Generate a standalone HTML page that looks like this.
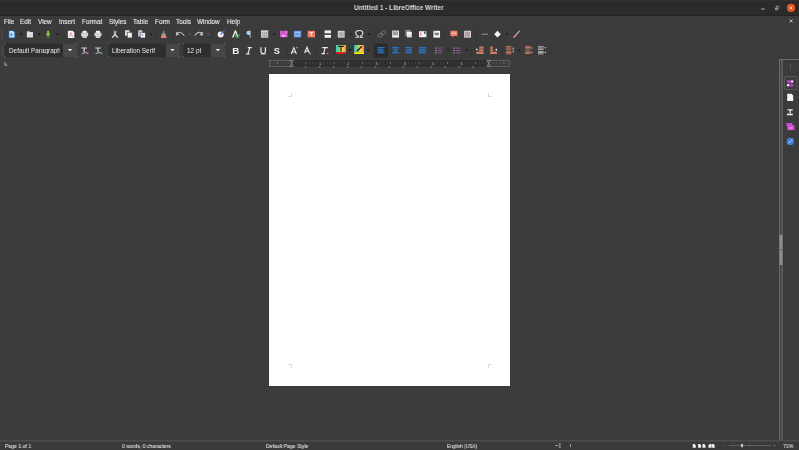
<!DOCTYPE html>
<html><head><meta charset="utf-8">
<style>
*{margin:0;padding:0;box-sizing:border-box}
html,body{width:799px;height:450px;overflow:hidden;background:#3b3b3b;font-family:"Liberation Sans",sans-serif;position:relative}
.a{position:absolute}
#title{left:0;top:0;width:799px;height:16px;background:#2d2a2a;border-bottom:1px solid #252323;box-shadow:inset 0 1px 0 #333030}
#title .t{left:354.4px;top:3.6px;font-weight:bold;font-size:7px;color:#dedede;white-space:nowrap;transform:scaleX(0.922);transform-origin:0 0;will-change:transform}
.menu{top:18px;font-size:6.4px;color:#eaeaea;white-space:nowrap;-webkit-text-stroke:0.1px #eaeaea;will-change:transform}
#doc{left:0;top:58px;width:779px;height:383px;background:#3c3c3c}
#page{left:269px;top:74px;width:241px;height:312px;background:#fff;box-shadow:0 0 1.5px 0.5px rgba(0,0,0,0.22)}
#status{left:0;top:440px;width:799px;height:10px;background:#3a3a3a;border-top:1px solid #4c4c4c;box-shadow:inset 0 1px 0 #444}
.st{top:442.6px;font-size:5.8px;color:#e4e4e4;white-space:nowrap;transform:scaleX(0.88);transform-origin:0 0;-webkit-text-stroke:0.05px #e4e4e4;will-change:transform}
.cb{top:46.6px;font-size:6.4px;color:#e8e8e8;white-space:nowrap;overflow:hidden;will-change:transform}
</style></head><body>
<div id="title" class="a"><div class="t a">Untitled 1 - LibreOffice Writer</div></div>
<div class="a menu" style="left:4px">File</div>
<div class="a menu" style="left:20px">Edit</div>
<div class="a menu" style="left:37.5px">View</div>
<div class="a menu" style="left:58.5px">Insert</div>
<div class="a menu" style="left:82px">Format</div>
<div class="a menu" style="left:109px">Styles</div>
<div class="a menu" style="left:133px">Table</div>
<div class="a menu" style="left:154.5px">Form</div>
<div class="a menu" style="left:176px">Tools</div>
<div class="a menu" style="left:197px">Window</div>
<div class="a menu" style="left:227px">Help</div>
<div id="doc" class="a"></div>
<div id="page" class="a"></div>
<div id="status" class="a"></div>
<div class="a st" style="left:5px">Page 1 of 1</div>
<div class="a st" style="left:122px">0 words, 0 characters</div>
<div class="a st" style="left:266px">Default Page Style</div>
<div class="a st" style="left:447px;transform:scaleX(0.83)">English (USA)</div>
<div class="a st" style="left:783px">71%</div>
<svg class="a" style="left:0;top:0" width="799" height="450" viewBox="0 0 799 450"><rect x="1.3" y="29" width="1.4" height="0.6" fill="#5a5a5a"/><rect x="1.3" y="30" width="1.4" height="0.6" fill="#5a5a5a"/><rect x="1.3" y="31" width="1.4" height="0.6" fill="#5a5a5a"/><rect x="1.3" y="32" width="1.4" height="0.6" fill="#5a5a5a"/><rect x="1.3" y="33" width="1.4" height="0.6" fill="#5a5a5a"/><rect x="1.3" y="34" width="1.4" height="0.6" fill="#5a5a5a"/><rect x="1.3" y="35" width="1.4" height="0.6" fill="#5a5a5a"/><rect x="1.3" y="36" width="1.4" height="0.6" fill="#5a5a5a"/><rect x="1.3" y="37" width="1.4" height="0.6" fill="#5a5a5a"/><rect x="1.3" y="38" width="1.4" height="0.6" fill="#5a5a5a"/><path d="M8.5 30.2 H13.5 L15.2 32 V38.2 H8.5Z" fill="#1f5fa8"/><path d="M9.3 31 H13 L14.4 32.4 V37.4 H9.3Z" fill="#cfe3f5"/><path d="M10.5 32.5 L13 34.5 L10.8 37 Z" fill="#3d8fd6"/><path d="M19.8 33.5 L22.8 33.5 L21.3 35.3Z" fill="#151515"/><path d="M26.8 31.2 H29.5 L30.2 32 H33 V37.5 H26.8Z" fill="#cfcfcf"/><rect x="27.6" y="32.6" width="4.8" height="4.3" fill="#eeeeee"/><rect x="29.2" y="33.8" width="2.6" height="2.4" fill="#bcd3f0"/><path d="M37.8 33.5 L40.8 33.5 L39.3 35.3Z" fill="#151515"/><rect x="47.2" y="30.8" width="1.8" height="3.2" fill="#9ad04a"/><path d="M45.6 33.6 H50.6 L48.1 37 Z" fill="#8cc63f"/><rect x="46" y="37.2" width="4.2" height="0.4" fill="#777"/><path d="M56.2 33.5 L59.2 33.5 L57.7 35.3Z" fill="#151515"/><rect x="62.6" y="29" width="0.6" height="11" fill="#333"/><path d="M67.9 30.8 H72.6 L74.3 32.5 V37.9 H67.9Z" fill="#f4f4f4"/><path d="M69.3 37 L70.9 32.5 L72.6 37" stroke="#e86a6a" stroke-width="0.7" fill="none"/><rect x="82.6" y="30.8" width="4" height="2.2" fill="#f4f4f4"/><rect x="81" y="32.6" width="7.2" height="3.6" rx="1.2" fill="#d0d0d0"/><rect x="82.4" y="35.6" width="4.4" height="2.2" fill="#f4f4f4"/><rect x="82.8" y="36.4" width="3.6" height="0.7" fill="#8fb4f0"/><rect x="96" y="30.8" width="4" height="2.2" fill="#f4f4f4"/><rect x="94.4" y="32.6" width="7.2" height="3.6" rx="1.2" fill="#d0d0d0"/><circle cx="98" cy="34.4" r="1.3" fill="#f4f4f4"/><circle cx="98" cy="34.4" r="0.6" fill="#777"/><rect x="95.8" y="35.6" width="4.4" height="2.2" fill="#f4f4f4"/><rect x="96.2" y="36.4" width="3.6" height="0.7" fill="#8fb4f0"/><rect x="106.2" y="29" width="0.6" height="11" fill="#333"/><path d="M114.1 30.8 L114.6 34.6 M115.9 30.8 L115.4 34.6" stroke="#c8c8c8" stroke-width="1" fill="none"/><path d="M115 34.2 L112.6 37.2 M115 34.2 L117.4 37.2" stroke="#c8c8c8" stroke-width="1.6" stroke-linecap="round" fill="none"/><rect x="125" y="30.2" width="4.5" height="5.5" fill="#d9d9d9"/><rect x="127.3" y="32.3" width="4.8" height="5.6" fill="#f2f2f2" stroke="#3b3b3b" stroke-width="0.5"/><rect x="138" y="30.6" width="4.6" height="6" fill="#bcbcbc"/><rect x="139.3" y="30.2" width="2" height="1" fill="#e0e0e0"/><rect x="140.4" y="32.8" width="4.8" height="5.1" fill="#f4f4f4" stroke="#3b3b3b" stroke-width="0.4"/><rect x="141.6" y="34" width="1.6" height="1.6" fill="#6aa0e8"/><path d="M149.8 33.5 L152.8 33.5 L151.3 35.3Z" fill="#151515"/><rect x="155.7" y="29" width="0.6" height="11" fill="#333"/><rect x="163.2" y="30.8" width="1" height="2.6" fill="#aaa"/><path d="M162 33.3 H165.4 L166.4 37.8 H161Z" fill="#9a9a9a"/><path d="M161.5 35.5 H166 L166.4 37.9 H161Z" fill="#ef7e66"/><rect x="172.6" y="29" width="0.6" height="11" fill="#333"/><path d="M176.6 33.2 Q180.5 30.4 184.3 35.6" stroke="#c0c0c0" stroke-width="1.1" fill="none"/><path d="M175.8 31.8 L176.2 35.8 L179.4 34.6Z" fill="#c0c0c0"/><path d="M188.8 33.5 L190.8 33.5 L189.8 35.3Z" fill="#777"/><path d="M194.6 35.8 Q198 30.4 202 33.2" stroke="#c8c8c8" stroke-width="1.1" fill="none"/><path d="M203 31.8 L202.6 36 L199.4 34.6Z" fill="#c8c8c8"/><path d="M207.2 33.5 L209.2 33.5 L208.2 35.3Z" fill="#777"/><rect x="212.3" y="29" width="0.6" height="11" fill="#333"/><circle cx="220.7" cy="34.4" r="3" fill="#f2f2f2"/><path d="M220.8 34.4 L224.6 30.3" stroke="#2f6fc9" stroke-width="1.2"/><circle cx="220.2" cy="34.9" r="0.5" fill="#e06060"/><path d="M232 37.4 L234.9 30.2 H235.9 L238.8 37.4 H237.2 L235.4 32.6 L233.6 37.4Z" fill="#eeeeee"/><path d="M234.2 35.2 L236.6 35.2" stroke="#9a9a9a" stroke-width="0.8"/><path d="M235.4 36 L236.9 37.6 L239.9 34.4" stroke="#2ea84a" stroke-width="1.2" fill="none"/><path d="M248.8 30.8 H250.6 V37.8 H249.8 V35 Q246.4 35 246.4 32.9 Q246.4 30.8 248.8 30.8Z" fill="#a8d4f2"/><rect x="255.6" y="29" width="0.6" height="11" fill="#333"/><rect x="261" y="30.6" width="7.2" height="7.2" fill="#c8c8c8"/><rect x="262.6" y="31.2" width="0.6" height="6" fill="#8a8a8a"/><rect x="264.5" y="31.2" width="0.6" height="6" fill="#8a8a8a"/><rect x="266.3" y="31.2" width="0.6" height="6" fill="#8a8a8a"/><rect x="261" y="30.6" width="7.2" height="0.8" fill="#f0f0f0"/><path d="M272.8 33.5 L275.8 33.5 L274.3 35.3Z" fill="#151515"/><rect x="280" y="30.8" width="7.6" height="6.4" fill="#d455d0"/><path d="M281.4 36.4 Q283.6 33.2 286 36.4Z" fill="#f5d9f3"/><circle cx="286.2" cy="31.9" r="0.6" fill="#f5d9f3"/><rect x="293.8" y="30.8" width="7.4" height="6.6" fill="#5b8fe0"/><rect x="294.6" y="31.6" width="5.6" height="4.8" fill="#9cc0f5"/><rect x="295.4" y="33.2" width="4" height="1.8" fill="#5b8fe0"/><rect x="307.6" y="30.8" width="7.4" height="6.6" fill="#f17e68"/><path d="M309.6 32.6 H313 M311.3 32.6 V36" stroke="#fff" stroke-width="0.8"/><rect x="318.8" y="29" width="0.6" height="11" fill="#333"/><rect x="324.6" y="30.4" width="6.4" height="3" fill="#f0f0f0"/><rect x="324.6" y="34.8" width="6.4" height="3" fill="#f0f0f0"/><rect x="324.6" y="33.6" width="6.4" height="0.6" fill="#6a3a62"/><rect x="337.8" y="30.8" width="6.8" height="6.8" fill="#e2e2e2"/><rect x="338.6" y="31.6" width="5.2" height="5.2" fill="#b4b4b4"/><rect x="340.4" y="33.6" width="1.6" height="0.9" fill="#e055d0"/><path d="M349.3 33.5 L352.3 33.5 L350.8 35.3Z" fill="#151515"/><path d="M355.4 37.3 H358.3 V36.3 Q355.7 35.2 355.7 33.3 Q355.7 30.5 359.3 30.5 Q362.9 30.5 362.9 33.3 Q362.9 35.2 360.3 36.3 V37.3 H363.2" stroke="#e8e8e8" stroke-width="1.1" fill="none"/><path d="M367.5 33.5 L370.5 33.5 L369 35.3Z" fill="#151515"/><rect x="373.8" y="29" width="0.6" height="11" fill="#333"/><g transform="translate(381.8 34) scale(0.85) rotate(-40) translate(-381.8 -34)"><rect x="376.6" y="32.4" width="5.4" height="3.2" rx="0.9" fill="none" stroke="#9a9a9a" stroke-width="0.7"/><rect x="381.6" y="32.4" width="5.4" height="3.2" rx="0.9" fill="none" stroke="#9a9a9a" stroke-width="0.7"/></g><rect x="392.2" y="30.6" width="6.8" height="7" fill="#f2f2f2"/><rect x="393" y="31.4" width="5.2" height="3.6" fill="#9e9e9e"/><rect x="393" y="35.6" width="5.2" height="0.4" fill="#f08a7a"/><rect x="405.6" y="30.4" width="5" height="5.6" fill="#cfcfcf"/><rect x="406.8" y="31.6" width="5.2" height="6" fill="#f2f2f2" stroke="#3b3b3b" stroke-width="0.4"/><rect x="407.4" y="35.6" width="4" height="0.5" fill="#f08a7a"/><rect x="419" y="31.2" width="7.4" height="6" fill="#f2f2f2"/><rect x="420.2" y="32.6" width="1" height="3" fill="#e66"/><path d="M424 31.6 H425.6 V34.2 L424.8 33.6 L424 34.2Z" fill="#555"/><rect x="433.4" y="30.8" width="6.6" height="6.8" fill="#f2f2f2"/><rect x="434.8" y="32.8" width="4" height="2.4" fill="#7a7a7a"/><rect x="434" y="31.6" width="1.6" height="0.6" fill="#e88"/><rect x="444" y="29" width="0.6" height="11" fill="#333"/><rect x="450.4" y="30.8" width="7" height="5.2" rx="0.8" fill="#f1816c"/><path d="M452 35.8 L452.6 37.4 L453.8 35.8Z" fill="#f1816c"/><rect x="451.4" y="32.6" width="5" height="1.4" fill="#f7b3a4"/><rect x="464.2" y="30.8" width="6.8" height="6.8" fill="#e4e4e4"/><rect x="465" y="31.6" width="5.2" height="5.2" fill="#a6a6a6"/><path d="M465.6 32.2 L469.8 36.2" stroke="#e88a7a" stroke-width="0.9"/><rect x="475" y="29" width="0.6" height="11" fill="#333"/><rect x="481.4" y="33.6" width="6.6" height="1.4" rx="0.5" fill="#777"/><path d="M497.5 30.8 L500.8 34.2 L497.5 37.6 L494.2 34.2Z" fill="#f6f6f6"/><path d="M505.8 33.5 L508.2 33.5 L507 35.3Z" fill="#151515"/><path d="M514.4 36.6 L519.4 31.2" stroke="#bdbdbd" stroke-width="1.2" stroke-linecap="round"/><circle cx="514.3" cy="36.8" r="1.1" fill="#f07a66"/><rect x="1.3" y="45" width="1.4" height="0.6" fill="#5a5a5a"/><rect x="1.3" y="46" width="1.4" height="0.6" fill="#5a5a5a"/><rect x="1.3" y="47" width="1.4" height="0.6" fill="#5a5a5a"/><rect x="1.3" y="48" width="1.4" height="0.6" fill="#5a5a5a"/><rect x="1.3" y="49" width="1.4" height="0.6" fill="#5a5a5a"/><rect x="1.3" y="50" width="1.4" height="0.6" fill="#5a5a5a"/><rect x="1.3" y="51" width="1.4" height="0.6" fill="#5a5a5a"/><rect x="1.3" y="52" width="1.4" height="0.6" fill="#5a5a5a"/><rect x="1.3" y="53" width="1.4" height="0.6" fill="#5a5a5a"/><rect x="1.3" y="54" width="1.4" height="0.6" fill="#5a5a5a"/><rect x="1.3" y="55" width="1.4" height="0.6" fill="#5a5a5a"/><rect x="5" y="43.6" width="58" height="13.6" fill="#2e2e2e"/><rect x="63" y="44" width="14" height="13.2" fill="#474747"/><path d="M67.8 49 H72.2 L70.0 51.3Z" fill="#f4f4f4"/><rect x="4.5" y="43.1" width="1.1" height="1.1" fill="#707070"/><rect x="76.5" y="43.1" width="1.1" height="1.1" fill="#707070"/><rect x="4.5" y="56.5" width="1.1" height="1.1" fill="#707070"/><rect x="76.5" y="56.5" width="1.1" height="1.1" fill="#707070"/><rect x="108.6" y="43.6" width="57.30000000000001" height="13.6" fill="#2e2e2e"/><rect x="165.9" y="44" width="13.099999999999994" height="13.2" fill="#474747"/><path d="M170.25 49 H174.64999999999998 L172.45 51.3Z" fill="#f4f4f4"/><rect x="108.1" y="43.1" width="1.1" height="1.1" fill="#707070"/><rect x="178.5" y="43.1" width="1.1" height="1.1" fill="#707070"/><rect x="108.1" y="56.5" width="1.1" height="1.1" fill="#707070"/><rect x="178.5" y="56.5" width="1.1" height="1.1" fill="#707070"/><rect x="183.2" y="43.6" width="27.600000000000023" height="13.6" fill="#2e2e2e"/><rect x="210.8" y="44" width="14.199999999999989" height="13.2" fill="#474747"/><path d="M215.70000000000002 49 H220.1 L217.9 51.3Z" fill="#f4f4f4"/><rect x="182.7" y="43.1" width="1.1" height="1.1" fill="#707070"/><rect x="224.5" y="43.1" width="1.1" height="1.1" fill="#707070"/><rect x="182.7" y="56.5" width="1.1" height="1.1" fill="#707070"/><rect x="224.5" y="56.5" width="1.1" height="1.1" fill="#707070"/><path d="M81.4 47.4 H87.0 V48.6 H84.80000000000001 V52 H83.60000000000001 V48.6 H81.4Z" fill="#d8d8d8"/><path d="M81.80000000000001 53.6 L87.0 52.2" stroke="#d8d8d8" stroke-width="0.8"/><circle cx="87.60000000000001" cy="53.4" r="1.1" fill="#c34fcf"/><path d="M95.2 47.4 H100.8 V48.6 H98.60000000000001 V52 H97.4 V48.6 H95.2Z" fill="#d8d8d8"/><path d="M95.60000000000001 53.6 L100.8 52.2" stroke="#d8d8d8" stroke-width="0.8"/><circle cx="101.4" cy="53.4" r="1.1" fill="#3cba4a"/><text x="232.2" y="54.4" font-family="Liberation Sans" font-weight="bold" font-size="9.8" fill="#f2f2f2">B</text><path d="M247.8 47.6 H251.8 M245.8 54 H249.8 M249.8 47.6 L247.8 54" stroke="#eee" stroke-width="1.1"/><path d="M261 47.2 V51.8 Q261 53.6 263.2 53.6 Q265.4 53.6 265.4 51.8 V47.2" stroke="#eee" stroke-width="1.2" fill="none"/><rect x="260.2" y="54.4" width="6" height="0.5" fill="#aaa"/><text x="273.8" y="54.2" font-family="Liberation Sans" font-weight="bold" font-size="9.2" fill="#eeeeee">S</text><rect x="287.4" y="44" width="0.6" height="13" fill="#333"/><path d="M291.2 54 L293.8 47.6 L296.4 54 M292.2 52 H295.4" stroke="#ededed" stroke-width="1.1" fill="none"/><circle cx="297" cy="47.6" r="0.9" fill="#6aa6de"/><path d="M304.6 53 L307 47.2 L309.4 53 M305.6 51.2 H308.6" stroke="#ededed" stroke-width="1.1" fill="none"/><circle cx="310.2" cy="53.6" r="0.9" fill="#6aa6de"/><rect x="316.2" y="44" width="0.6" height="13" fill="#333"/><path d="M322.2 47.6 H327.8 M325.2 47.6 L323.6 53.6 M321.4 53.6 H325" stroke="#ededed" stroke-width="1.1" fill="none"/><circle cx="327.6" cy="53.4" r="1" fill="#ee5252"/><rect x="333" y="44" width="0.6" height="13" fill="#333"/><defs><linearGradient id="rb" x1="0" x2="1"><stop offset="0" stop-color="#3fc7c7"/><stop offset="0.35" stop-color="#8bd35a"/><stop offset="0.65" stop-color="#f6d25a"/><stop offset="1" stop-color="#f08a4a"/></linearGradient></defs><rect x="336" y="45" width="10" height="7.2" fill="url(#rb)"/><path d="M338.2 46.4 H343.8 M341 46.4 V51.6" stroke="#1a1a1a" stroke-width="1.1"/><rect x="336" y="52.2" width="10" height="1.8" fill="#e01b1b"/><path d="M348.7 49.4 L351.7 49.4 L350.2 51.199999999999996Z" fill="#151515"/><rect x="354.2" y="45" width="9.8" height="7.2" fill="url(#rb)"/><path d="M357 51.2 L361.8 46.2" stroke="#1a1a1a" stroke-width="1.3"/><rect x="354.2" y="52.2" width="9.8" height="1.8" fill="#f5f000"/><path d="M366.7 49.4 L369.7 49.4 L368.2 51.199999999999996Z" fill="#151515"/><rect x="373" y="44" width="0.6" height="13" fill="#333"/><rect x="374.4" y="43.6" width="13.4" height="13.8" rx="1" fill="#2b2b2b"/><rect x="377.60" y="47.0" width="7.00" height="1.25" fill="#2b72c2"/><rect x="377.60" y="48.7" width="4.34" height="1.25" fill="#2b72c2"/><rect x="377.60" y="50.4" width="4.34" height="1.25" fill="#2b72c2"/><rect x="377.60" y="52.1" width="7.00" height="1.25" fill="#2b72c2"/><path d="M381.94 48.7 L384.6 50.4 L381.94 52.1Z" fill="#2b72c2"/><rect x="392.00" y="47.0" width="7.00" height="1.25" fill="#2b72c2"/><rect x="393.40" y="48.7" width="4.20" height="1.25" fill="#2b72c2"/><rect x="393.40" y="50.4" width="4.20" height="1.25" fill="#2b72c2"/><rect x="392.00" y="52.1" width="7.00" height="1.25" fill="#2b72c2"/><rect x="405.00" y="47.0" width="7.00" height="1.25" fill="#2b72c2"/><rect x="407.66" y="48.7" width="4.34" height="1.25" fill="#2b72c2"/><rect x="407.66" y="50.4" width="4.34" height="1.25" fill="#2b72c2"/><rect x="405.00" y="52.1" width="7.00" height="1.25" fill="#2b72c2"/><path d="M407.66 48.7 L405 50.4 L407.66 52.1Z" fill="#2b72c2"/><rect x="418.80" y="47.0" width="7.00" height="1.25" fill="#2b72c2"/><rect x="418.80" y="48.7" width="7.00" height="1.25" fill="#2b72c2"/><rect x="418.80" y="50.4" width="7.00" height="1.25" fill="#2b72c2"/><rect x="418.80" y="52.1" width="7.00" height="1.25" fill="#2b72c2"/><rect x="431.8" y="44" width="0.6" height="13" fill="#333"/><rect x="435.2" y="47.6" width="1.4" height="0.9" fill="#bdbdbd"/><rect x="437.59999999999997" y="47.6" width="4.8" height="0.9" fill="#a24fb0"/><rect x="435.2" y="50" width="1.4" height="0.9" fill="#bdbdbd"/><rect x="437.59999999999997" y="50" width="4.8" height="0.9" fill="#a24fb0"/><rect x="435.2" y="52.4" width="1.4" height="0.9" fill="#bdbdbd"/><rect x="437.59999999999997" y="52.4" width="4.8" height="0.9" fill="#a24fb0"/><path d="M446.9 49.5 L449.5 49.5 L448.2 51.3Z" fill="#151515"/><rect x="453.4" y="47.6" width="1.4" height="0.9" fill="#bdbdbd"/><rect x="455.79999999999995" y="47.6" width="4.8" height="0.9" fill="#a24fb0"/><rect x="453.4" y="50" width="1.4" height="0.9" fill="#bdbdbd"/><rect x="455.79999999999995" y="50" width="4.8" height="0.9" fill="#a24fb0"/><rect x="453.4" y="52.4" width="1.4" height="0.9" fill="#bdbdbd"/><rect x="455.79999999999995" y="52.4" width="4.8" height="0.9" fill="#a24fb0"/><path d="M465.5 49.5 L468.1 49.5 L466.8 51.3Z" fill="#151515"/><rect x="471.4" y="44" width="0.6" height="13" fill="#333"/><rect x="479.2" y="46.6" width="4.4" height="1.2" fill="#dd8469"/><rect x="479.2" y="48.3" width="4.4" height="1.2" fill="#dd8469"/><rect x="479.2" y="50.0" width="4.4" height="1.2" fill="#dd8469"/><rect x="476.4" y="51.7" width="7.2" height="1.2" fill="#dd8469"/><rect x="476.4" y="53.0" width="7.2" height="0.9" fill="#dd8469"/><path d="M476.2 48.2 L478.2 49.4 L476.2 50.6Z" fill="#f0f0f0"/><rect x="490.2" y="46.6" width="2.8" height="1.2" fill="#dd8469"/><rect x="490.2" y="48.3" width="2.8" height="1.2" fill="#dd8469"/><rect x="490.2" y="50.0" width="2.8" height="1.2" fill="#dd8469"/><rect x="490.2" y="51.7" width="6.6" height="1.2" fill="#dd8469"/><rect x="490.2" y="53.0" width="6.6" height="0.9" fill="#dd8469"/><path d="M497 48.6 L495 49.8 L497 51Z" fill="#f0f0f0"/><rect x="502" y="44" width="0.6" height="13" fill="#333"/><rect x="506" y="46.30" width="5.4" height="0.8" fill="#d9826a"/><rect x="506" y="47.60" width="5.4" height="0.8" fill="#d9826a"/><rect x="506" y="48.90" width="5.4" height="0.8" fill="#d9826a"/><rect x="506" y="50.90" width="5.4" height="0.8" fill="#d9826a"/><rect x="506" y="52.20" width="5.4" height="0.8" fill="#d9826a"/><rect x="506" y="53.50" width="5.4" height="0.8" fill="#d9826a"/><path d="M512.3 48.4 L513.1 47.2 L513.9 48.4Z M512.3 51.6 L513.1 52.8 L513.9 51.6Z" fill="#e8e8e8"/><rect x="512.85" y="48" width="0.5" height="3.8" fill="#cfcfcf"/><path d="M518.0 49.6 L520.4000000000001 49.6 L519.2 51.4Z" fill="#151515"/><rect x="525.2" y="45.90" width="5.4" height="0.8" fill="#d9826a"/><rect x="525.2" y="47.20" width="5.4" height="0.8" fill="#d9826a"/><rect x="525.2" y="48.50" width="5.4" height="0.8" fill="#d9826a"/><rect x="525.2" y="50.60" width="5.4" height="0.8" fill="#d9826a"/><rect x="525.2" y="51.90" width="5.4" height="0.8" fill="#d9826a"/><rect x="525.2" y="53.20" width="5.4" height="0.8" fill="#d9826a"/><path d="M531.4 47.2 L532.8 48 L531.4 48.8Z M531.4 51.6 L532.8 52.4 L531.4 53.2Z" fill="#e8e8e8"/><rect x="538" y="46.30" width="5.6" height="0.8" fill="#c8c8c8"/><rect x="538" y="47.60" width="5.6" height="0.8" fill="#c8c8c8"/><rect x="538" y="48.90" width="5.6" height="0.8" fill="#c8c8c8"/><rect x="538" y="50.90" width="5.6" height="0.8" fill="#c8c8c8"/><rect x="538" y="52.20" width="5.6" height="0.8" fill="#c8c8c8"/><rect x="538" y="53.50" width="5.6" height="0.8" fill="#c8c8c8"/><path d="M544.4 47.2 H546.2 L545.3 48.6Z M544.4 53 H546.2 L545.3 51.6Z" fill="#e8e8e8"/><rect x="269" y="60" width="241" height="6.6" fill="#2e2e2e"/><rect x="269.4" y="60.3" width="22.30000000000001" height="6" fill="#3c3c3c" stroke="#858585" stroke-width="0.5"/><rect x="488.6" y="60.3" width="20.799999999999983" height="6" fill="#3c3c3c" stroke="#858585" stroke-width="0.5"/><rect x="270.17" y="62.6" width="0.6" height="0.7" fill="#8a8a8a"/><rect x="273.71" y="62.6" width="0.6" height="0.7" fill="#8a8a8a"/><rect x="277.25" y="61.9" width="0.6" height="2" fill="#9a9a9a"/><rect x="280.79" y="62.6" width="0.6" height="0.7" fill="#8a8a8a"/><rect x="284.32" y="62.6" width="0.6" height="0.7" fill="#8a8a8a"/><rect x="287.86" y="62.6" width="0.6" height="0.7" fill="#8a8a8a"/><rect x="294.94" y="62.6" width="0.6" height="0.7" fill="#8a8a8a"/><rect x="298.47" y="62.6" width="0.6" height="0.7" fill="#8a8a8a"/><rect x="302.01" y="62.6" width="0.6" height="0.7" fill="#8a8a8a"/><rect x="305.55" y="61.9" width="0.6" height="2" fill="#9a9a9a"/><rect x="309.09" y="62.6" width="0.6" height="0.7" fill="#8a8a8a"/><rect x="312.62" y="62.6" width="0.6" height="0.7" fill="#8a8a8a"/><rect x="316.16" y="62.6" width="0.6" height="0.7" fill="#8a8a8a"/><rect x="323.24" y="62.6" width="0.6" height="0.7" fill="#8a8a8a"/><rect x="326.77" y="62.6" width="0.6" height="0.7" fill="#8a8a8a"/><rect x="330.31" y="62.6" width="0.6" height="0.7" fill="#8a8a8a"/><rect x="333.85" y="61.9" width="0.6" height="2" fill="#9a9a9a"/><rect x="337.39" y="62.6" width="0.6" height="0.7" fill="#8a8a8a"/><rect x="340.92" y="62.6" width="0.6" height="0.7" fill="#8a8a8a"/><rect x="344.46" y="62.6" width="0.6" height="0.7" fill="#8a8a8a"/><rect x="351.54" y="62.6" width="0.6" height="0.7" fill="#8a8a8a"/><rect x="355.07" y="62.6" width="0.6" height="0.7" fill="#8a8a8a"/><rect x="358.61" y="62.6" width="0.6" height="0.7" fill="#8a8a8a"/><rect x="362.15" y="61.9" width="0.6" height="2" fill="#9a9a9a"/><rect x="365.69" y="62.6" width="0.6" height="0.7" fill="#8a8a8a"/><rect x="369.22" y="62.6" width="0.6" height="0.7" fill="#8a8a8a"/><rect x="372.76" y="62.6" width="0.6" height="0.7" fill="#8a8a8a"/><rect x="379.84" y="62.6" width="0.6" height="0.7" fill="#8a8a8a"/><rect x="383.38" y="62.6" width="0.6" height="0.7" fill="#8a8a8a"/><rect x="386.91" y="62.6" width="0.6" height="0.7" fill="#8a8a8a"/><rect x="390.45" y="61.9" width="0.6" height="2" fill="#9a9a9a"/><rect x="393.99" y="62.6" width="0.6" height="0.7" fill="#8a8a8a"/><rect x="397.52" y="62.6" width="0.6" height="0.7" fill="#8a8a8a"/><rect x="401.06" y="62.6" width="0.6" height="0.7" fill="#8a8a8a"/><rect x="408.14" y="62.6" width="0.6" height="0.7" fill="#8a8a8a"/><rect x="411.68" y="62.6" width="0.6" height="0.7" fill="#8a8a8a"/><rect x="415.21" y="62.6" width="0.6" height="0.7" fill="#8a8a8a"/><rect x="418.75" y="61.9" width="0.6" height="2" fill="#9a9a9a"/><rect x="422.29" y="62.6" width="0.6" height="0.7" fill="#8a8a8a"/><rect x="425.82" y="62.6" width="0.6" height="0.7" fill="#8a8a8a"/><rect x="429.36" y="62.6" width="0.6" height="0.7" fill="#8a8a8a"/><rect x="436.44" y="62.6" width="0.6" height="0.7" fill="#8a8a8a"/><rect x="439.97" y="62.6" width="0.6" height="0.7" fill="#8a8a8a"/><rect x="443.51" y="62.6" width="0.6" height="0.7" fill="#8a8a8a"/><rect x="447.05" y="61.9" width="0.6" height="2" fill="#9a9a9a"/><rect x="450.59" y="62.6" width="0.6" height="0.7" fill="#8a8a8a"/><rect x="454.12" y="62.6" width="0.6" height="0.7" fill="#8a8a8a"/><rect x="457.66" y="62.6" width="0.6" height="0.7" fill="#8a8a8a"/><rect x="464.74" y="62.6" width="0.6" height="0.7" fill="#8a8a8a"/><rect x="468.27" y="62.6" width="0.6" height="0.7" fill="#8a8a8a"/><rect x="471.81" y="62.6" width="0.6" height="0.7" fill="#8a8a8a"/><rect x="475.35" y="61.9" width="0.6" height="2" fill="#9a9a9a"/><rect x="478.89" y="62.6" width="0.6" height="0.7" fill="#8a8a8a"/><rect x="482.43" y="62.6" width="0.6" height="0.7" fill="#8a8a8a"/><rect x="485.96" y="62.6" width="0.6" height="0.7" fill="#8a8a8a"/><rect x="493.04" y="62.6" width="0.6" height="0.7" fill="#8a8a8a"/><rect x="496.57" y="62.6" width="0.6" height="0.7" fill="#8a8a8a"/><rect x="500.11" y="62.6" width="0.6" height="0.7" fill="#8a8a8a"/><rect x="503.65" y="61.9" width="0.6" height="2" fill="#9a9a9a"/><rect x="507.19" y="62.6" width="0.6" height="0.7" fill="#8a8a8a"/><text x="320.00" y="64.6" font-family="Liberation Sans" font-size="3.8" fill="#b8c0c8" text-anchor="middle">1</text><text x="348.30" y="64.6" font-family="Liberation Sans" font-size="3.8" fill="#b8c0c8" text-anchor="middle">2</text><text x="376.60" y="64.6" font-family="Liberation Sans" font-size="3.8" fill="#b8c0c8" text-anchor="middle">3</text><text x="404.90" y="64.6" font-family="Liberation Sans" font-size="3.8" fill="#b8c0c8" text-anchor="middle">4</text><text x="433.20" y="64.6" font-family="Liberation Sans" font-size="3.8" fill="#b8c0c8" text-anchor="middle">5</text><text x="461.50" y="64.6" font-family="Liberation Sans" font-size="3.8" fill="#b8c0c8" text-anchor="middle">6</text><path d="M290.0 60.3 H293.4 L291.7 63.1 Z M290.0 66.3 H293.4 L291.7 63.5Z" fill="#3c3c3c" stroke="#c4c4c4" stroke-width="0.5"/><path d="M486.90000000000003 60.3 H490.3 L488.6 63.1 Z M486.90000000000003 66.3 H490.3 L488.6 63.5Z" fill="#3c3c3c" stroke="#c4c4c4" stroke-width="0.5"/><path d="M304.75 67.2 H306.55 M305.65 67.2 V66.2" stroke="#a8a8a8" stroke-width="0.5"/><path d="M318.70 67.2 H320.50 M319.60 67.2 V66.2" stroke="#a8a8a8" stroke-width="0.5"/><path d="M332.65 67.2 H334.45 M333.55 67.2 V66.2" stroke="#a8a8a8" stroke-width="0.5"/><path d="M346.60 67.2 H348.40 M347.50 67.2 V66.2" stroke="#a8a8a8" stroke-width="0.5"/><path d="M360.55 67.2 H362.35 M361.45 67.2 V66.2" stroke="#a8a8a8" stroke-width="0.5"/><path d="M374.50 67.2 H376.30 M375.40 67.2 V66.2" stroke="#a8a8a8" stroke-width="0.5"/><path d="M388.45 67.2 H390.25 M389.35 67.2 V66.2" stroke="#a8a8a8" stroke-width="0.5"/><path d="M402.40 67.2 H404.20 M403.30 67.2 V66.2" stroke="#a8a8a8" stroke-width="0.5"/><path d="M416.35 67.2 H418.15 M417.25 67.2 V66.2" stroke="#a8a8a8" stroke-width="0.5"/><path d="M430.30 67.2 H432.10 M431.20 67.2 V66.2" stroke="#a8a8a8" stroke-width="0.5"/><path d="M444.25 67.2 H446.05 M445.15 67.2 V66.2" stroke="#a8a8a8" stroke-width="0.5"/><path d="M458.20 67.2 H460.00 M459.10 67.2 V66.2" stroke="#a8a8a8" stroke-width="0.5"/><path d="M472.15 67.2 H473.95 M473.05 67.2 V66.2" stroke="#a8a8a8" stroke-width="0.5"/><path d="M288.3 96.5 H291.5 V93.3" stroke="#b0b0b0" stroke-width="0.5" fill="none"/><path d="M491.7 96.5 H488.5 V93.3" stroke="#b0b0b0" stroke-width="0.5" fill="none"/><path d="M288.3 364.5 H291.5 V367.7" stroke="#b0b0b0" stroke-width="0.5" fill="none"/><path d="M491.7 364.5 H488.5 V367.7" stroke="#b0b0b0" stroke-width="0.5" fill="none"/><path d="M4.9 62.2 V65.2 H7.3" stroke="#d0d0d0" stroke-width="0.8" fill="none"/><rect x="779" y="59" width="1" height="381" fill="#6c6c6c"/><rect x="780" y="59" width="1" height="381" fill="#3f3f3f"/><rect x="781" y="59" width="2" height="381" fill="#5a5a5a"/><rect x="779" y="59" width="20" height="1" fill="#6c6c6c"/><rect x="779.6" y="234.7" width="2.9" height="30.3" rx="0.4" fill="#8e8e8e"/><circle cx="781" cy="249.8" r="0.7" fill="#3a3a3a"/><rect x="790" y="63.8" width="0.6" height="0.8" fill="#8a8a8a"/><rect x="790" y="65.6" width="0.6" height="0.8" fill="#8a8a8a"/><rect x="790" y="67.4" width="0.6" height="0.8" fill="#8a8a8a"/><rect x="790" y="69.2" width="0.6" height="0.8" fill="#8a8a8a"/><rect x="784.3" y="76.5" width="12.6" height="13.1" rx="1.4" fill="#3c3c3c" stroke="#6e6e6e" stroke-width="0.6"/><rect x="786.7" y="80" width="6.8" height="3" rx="1.5" fill="#a048b8"/><circle cx="792.2" cy="81.5" r="1.1" fill="#fff"/><rect x="786.7" y="83.7" width="6.8" height="3" rx="1.5" fill="#a048b8"/><circle cx="788" cy="85.2" r="1.1" fill="#fff"/><path d="M787.2 93.8 H791.4 L793.2 95.6 V101 H787.2Z" fill="#f4f4f4"/><path d="M787.6 109.2 H792.8 V110.4 H790.8 V113.2 H789.6 V110.4 H787.6Z" fill="#f0f0f0"/><path d="M786.7 115.3 L787.4 113.6 L792.8 113.8 V115.3Z" fill="#f0f0f0"/><rect x="786.4" y="123" width="6" height="3.2" fill="#c94fcf"/><rect x="787.4" y="125.2" width="7" height="4.9" fill="#d455d6"/><rect x="789.6" y="127.6" width="2.4" height="0.7" fill="#f4c8f4"/><circle cx="790.3" cy="141.4" r="3.7" fill="#3f7fe3"/><path d="M788.4 143.3 L792.2 139.5" stroke="#fff" stroke-width="0.8"/><circle cx="791.6" cy="140.1" r="0.5" fill="#e55"/><path d="M692.8 444 H694.4499999999999 L695.8 445.3 V447.8 H692.8Z" fill="#f2f2f2"/><path d="M698.1 444 H699.75 L701.1 445.3 V447.8 H698.1Z" fill="#f2f2f2"/><path d="M702.5 444 H704.15 L705.5 445.3 V447.8 H702.5Z" fill="#f2f2f2"/><path d="M711.3 444 H709.7049999999999 L708.4 445.3 V447.8 H711.3Z" fill="#f2f2f2"/><path d="M711.6 444 H713.3050000000001 L714.7 445.3 V447.8 H711.6Z" fill="#f2f2f2"/><rect x="724" y="445.4" width="2" height="0.4" fill="#888"/><rect x="729" y="445.4" width="41.5" height="0.4" fill="#9a9a9a"/><rect x="741.2" y="443.8" width="1.6" height="3.4" rx="0.5" fill="#e8e8e8"/><rect x="749.6" y="444.6" width="0.4" height="1.8" fill="#aaa"/><path d="M773 445.6 H775.6 M774.3 444.3 V446.9" stroke="#888" stroke-width="0.4"/><rect x="555.6" y="445.2" width="2" height="0.8" fill="#e8e8e8"/><path d="M558.6 443.8 H561 M559.8 443.8 V447.2 M558.6 447.2 H561" stroke="#e8e8e8" stroke-width="0.5"/><rect x="570.4" y="444.2" width="0.6" height="2.8" fill="#e8e8e8"/><rect x="761" y="8.4" width="4" height="1.2" rx="0.4" fill="#a8a8a8"/><rect x="776.6" y="6.2" width="2.2" height="2.2" fill="none" stroke="#b0b0b0" stroke-width="0.6"/><rect x="775" y="7.4" width="3" height="2.8" fill="#b0b0b0" stroke="#2c2a2a" stroke-width="0.4"/><rect x="776" y="8.4" width="1" height="0.9" fill="#555"/><circle cx="791" cy="7.9" r="4.1" fill="#e9541f"/><path d="M789.8 6.7 L792.2 9.1 M792.2 6.7 L789.8 9.1" stroke="#fff" stroke-width="0.75"/><path d="M789.6 19.4 L792.6 22.4 M792.6 19.4 L789.6 22.4" stroke="#d0d0d0" stroke-width="0.85"/></svg>
<div class="a cb" style="left:9px;width:51px">Default Paragraph Style</div>
<div class="a cb" style="left:112px">Liberation Serif</div>
<div class="a cb" style="left:187px">12 pt</div>
</body></html>
